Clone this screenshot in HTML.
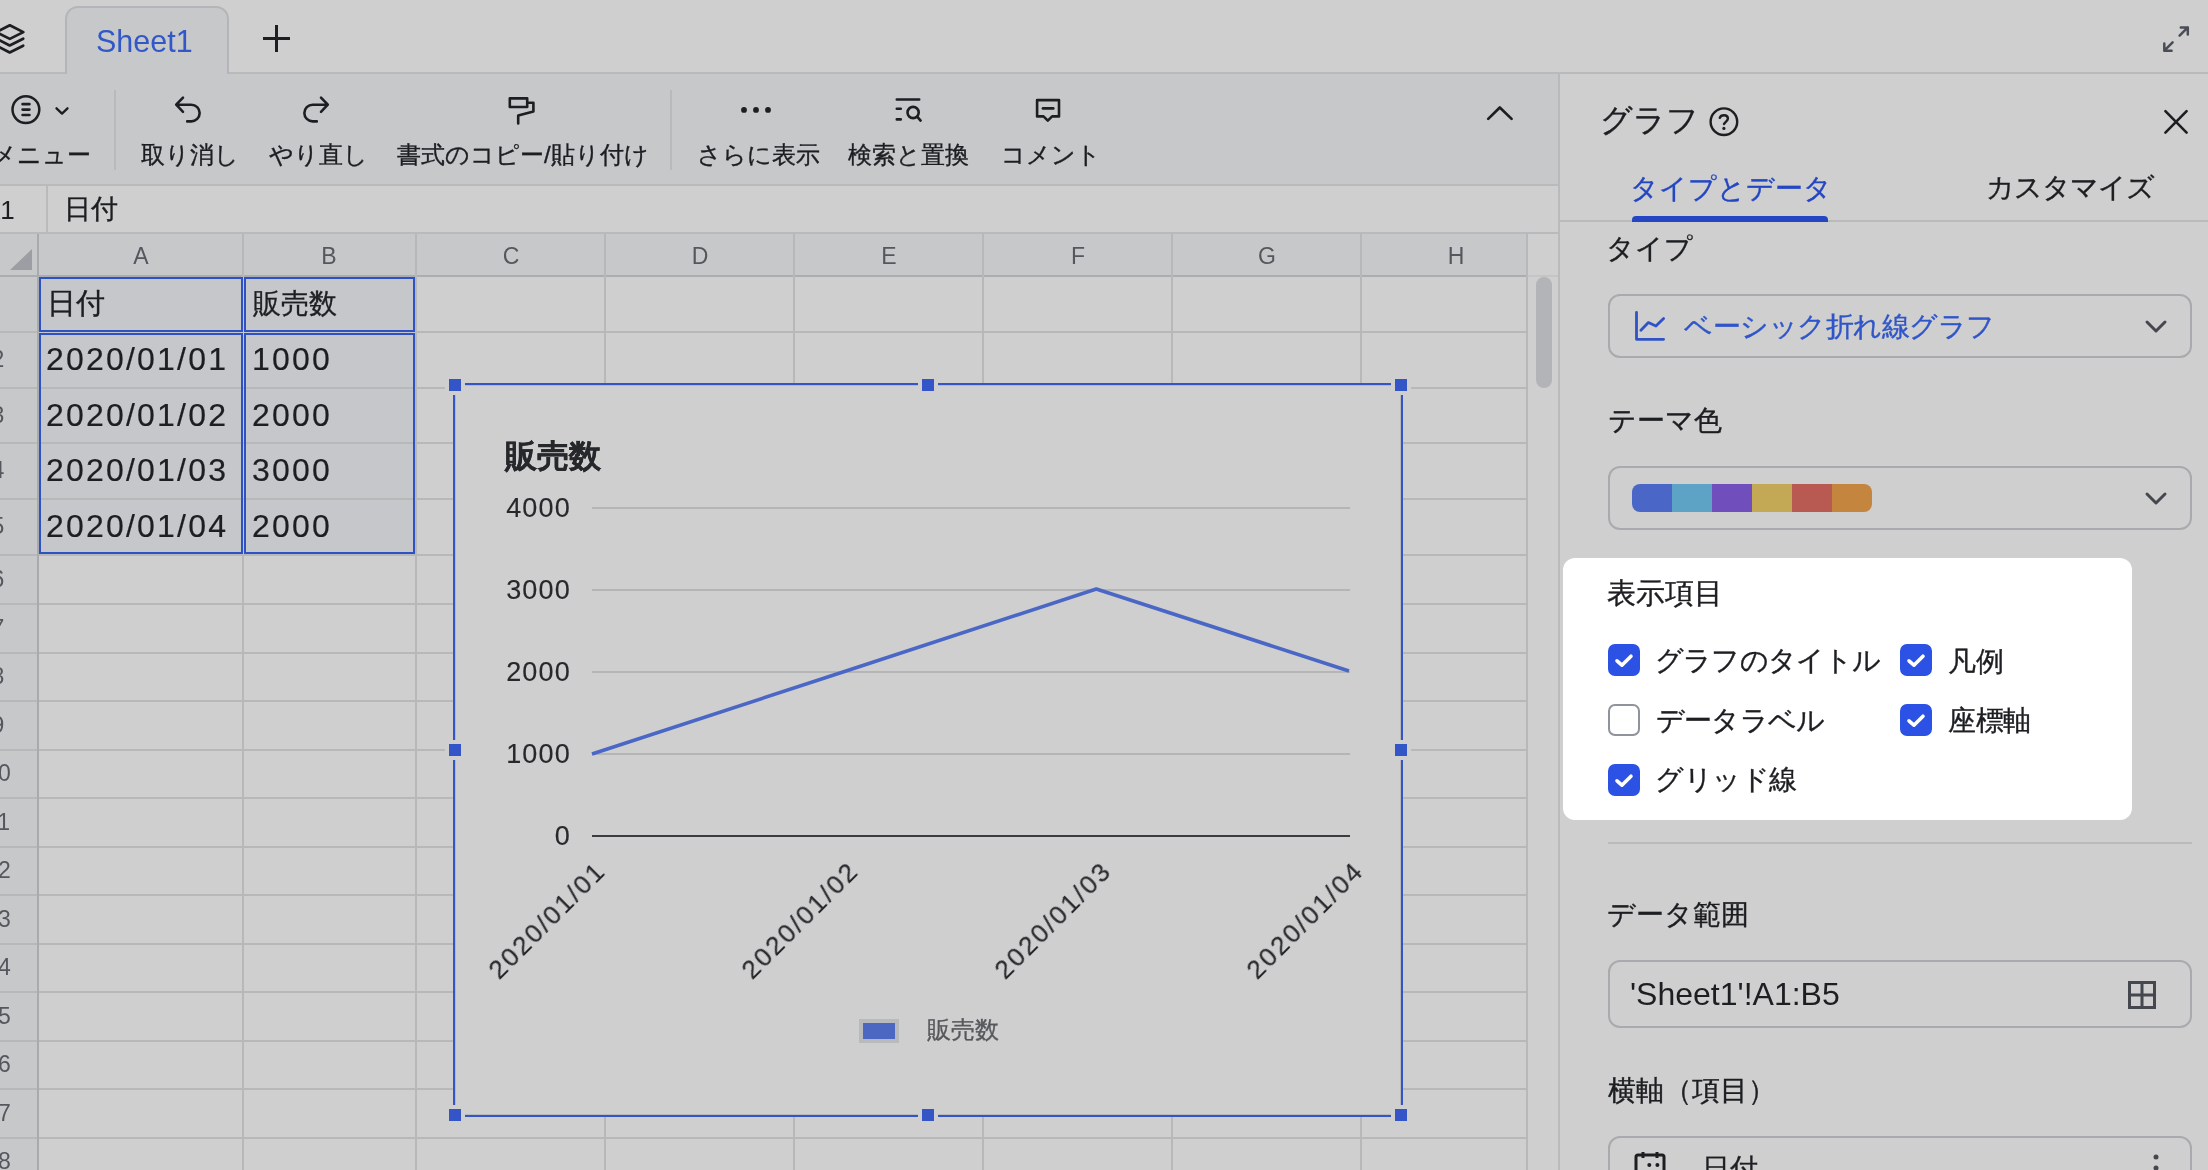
<!DOCTYPE html>
<html><head><meta charset="utf-8">
<style>
html,body{margin:0;padding:0}
body{width:2208px;height:1170px;overflow:hidden;position:relative;background:#cfcfcf;font-family:"Liberation Sans",sans-serif;color:#1c1e22}
.t{-webkit-text-stroke:0.35px currentColor}
.a{position:absolute}
.t{position:absolute;white-space:nowrap;line-height:1;will-change:transform}
.hl{position:absolute;height:2px;background:#bcbcbe}
.vl{position:absolute;width:2px;background:#bcbcbe}
svg{position:absolute;overflow:visible}
.tb{font-size:24px}
.tc{font-size:27px}
.cn{font-size:32px;letter-spacing:2.2px;-webkit-text-stroke:0.2px currentColor}
.cy{font-size:27px;letter-spacing:1.2px;-webkit-text-stroke:0.15px currentColor;color:#26282c}
.cx{font-size:26.3px;letter-spacing:2.1px;-webkit-text-stroke:0.15px currentColor;color:#26282c;white-space:nowrap}
</style></head><body>

<!-- ===== top tab bar ===== -->
<svg style="left:0;top:0" width="40" height="70" viewBox="0 0 40 70"><g fill="none" stroke="#1c1e22" stroke-width="2.7" stroke-linejoin="round" stroke-linecap="round">
<path d="M-3.7 32.1 L9.8 25.3 L23.3 32.1 L9.8 38.9 Z"/><path d="M-3.7 38.7 L9.7 45.5 L23.2 38.7"/><path d="M-3.7 45.7 L9.7 52.5 L23.2 45.7"/></g></svg>
<div class="a" style="left:65px;top:6px;width:164px;height:68px;background:#c7c8ca;border:2px solid #b4b5b8;border-bottom:none;border-radius:13px 13px 0 0;box-sizing:border-box"></div>
<div class="a" style="left:0;top:72px;width:65px;height:2px;background:#b9babc"></div>
<div class="a" style="left:229px;top:72px;width:1979px;height:2px;background:#b9babc"></div>
<div class="t" style="left:96px;top:26px;font-size:30.5px;color:#3258c8;-webkit-text-stroke:0">Sheet1</div>
<div class="a" style="left:263px;top:37px;width:27px;height:3px;background:#1c1e22"></div>
<div class="a" style="left:275px;top:25px;width:3px;height:27px;background:#1c1e22"></div>
<svg style="left:2140px;top:0" width="68" height="70" viewBox="2140 0 68 70"><path d="M2180.8 27.4 H2187.8 V34.5 M2187.8 27.4 L2179.6 35.6 M2164.3 43.4 V50.7 H2171.6 M2164.3 50.7 L2172.6 42.4" fill="none" stroke="#4a4d55" stroke-width="2.5" stroke-linecap="round" stroke-linejoin="round"/></svg>

<!-- ===== toolbar ===== -->
<div class="a" style="left:0;top:74px;width:1558px;height:111px;background:#c7c8ca"></div>
<div class="a" style="left:0;top:184px;width:1558px;height:2px;background:#b9babc"></div>
<div class="a" style="left:114px;top:90px;width:2px;height:80px;background:#b9babc"></div>
<div class="a" style="left:670px;top:90px;width:2px;height:80px;background:#b9babc"></div>

<svg style="left:0;top:0" width="2208" height="200" viewBox="0 0 2208 200">
<g fill="none" stroke="#1c1e22" stroke-linecap="round" stroke-linejoin="round">
<circle cx="25.9" cy="109.6" r="13.4" stroke-width="2.5"/>
<path d="M22.6 104.2 H29.4 M22.6 109.6 H29.4 M22.6 115 H29.4" stroke-width="2.7"/>
<path d="M56.5 108.3 L62 113.6 L67.5 108.3" stroke-width="2.3"/>
<path d="M183 97.6 L176.2 104.7 L183 111.8 M176.8 104.7 H191.3 A8.35 8.35 0 0 1 191.3 121.4 H187.2" stroke-width="2.6"/>
<path d="M321 97.6 L327.8 104.7 L321 111.8 M327.2 104.7 H312.7 A8.35 8.35 0 0 0 312.7 121.4 H316.8" stroke-width="2.6"/>
<path d="M509.8 98.4 H527.2 V107 H509.8 Z" stroke-width="2.6"/>
<path d="M527.6 102.8 H533.4 V111.6 L518.2 115.6 V123.4" stroke-width="2.6"/>
<path d="M896.8 99.5 H919.2 M896.8 108.7 H900.8 M896.8 119.4 H900.8" stroke-width="2.6"/>
<circle cx="913.1" cy="112.5" r="5.6" stroke-width="2.6"/>
<path d="M917.4 116.8 L920.6 120.6" stroke-width="2.6"/>
<path d="M1037.1 100.1 H1059 V116.4 H1052.1 L1047.8 120.6 L1043.5 116.4 H1037.1 Z" stroke-width="2.6"/>
<path d="M1042.9 108.4 H1053.3" stroke-width="2.6"/>
<path d="M1488.2 118.9 L1499.8 107.5 L1511.6 118.9" stroke-width="2.7"/>
</g>
<g fill="#1c1e22"><circle cx="744" cy="109.9" r="2.9"/><circle cx="756" cy="109.9" r="2.9"/><circle cx="768" cy="109.9" r="2.9"/></g>
</svg>
<div class="t tb" style="left:-8px;top:142.5px">メニュー</div>
<div class="t tb" style="left:141px;top:142.5px">取り消し</div>
<div class="t tb" style="left:269px;top:142.5px">やり直し</div>
<div class="t tb" style="left:397px;top:142.5px">書式のコピー/貼り付け</div>
<div class="t tb" style="left:697px;top:142.5px">さらに表示</div>
<div class="t tb" style="left:848px;top:142.5px">検索と置換</div>
<div class="t tb" style="left:1001px;top:142.5px">コメント</div>

<!-- ===== formula bar ===== -->
<div class="a" style="left:46px;top:186px;width:2px;height:47px;background:#b9babc"></div>
<div class="t" style="left:-17px;top:196.5px;font-size:26px;-webkit-text-stroke:0">A1</div>
<div class="t tc" style="left:63.5px;top:196px">日付</div>
<div class="a" style="left:0;top:232px;width:1558px;height:2px;background:#b9babc"></div>


<div class="a" style="left:0;top:234px;width:1527px;height:42px;background:#c7c8ca"></div>
<div class="a" style="left:1527px;top:234px;width:31px;height:936px;background:#cfcfcf"></div>
<div class="a" style="left:0;top:276px;width:37px;height:894px;background:#c7c8ca"></div>
<div class="a" style="left:0;top:330.8px;width:1527px;height:2px;background:#b7b8b8"></div>
<div class="a" style="left:0;top:386.8px;width:1527px;height:2px;background:#b7b8b8"></div>
<div class="a" style="left:0;top:442.4px;width:1527px;height:2px;background:#b7b8b8"></div>
<div class="a" style="left:0;top:498.1px;width:1527px;height:2px;background:#b7b8b8"></div>
<div class="a" style="left:0;top:553.6px;width:1527px;height:2px;background:#b7b8b8"></div>
<div class="a" style="left:0;top:603.3px;width:1527px;height:2px;background:#b7b8b8"></div>
<div class="a" style="left:0;top:651.8px;width:1527px;height:2px;background:#b7b8b8"></div>
<div class="a" style="left:0;top:700.3px;width:1527px;height:2px;background:#b7b8b8"></div>
<div class="a" style="left:0;top:748.8px;width:1527px;height:2px;background:#b7b8b8"></div>
<div class="a" style="left:0;top:797.3px;width:1527px;height:2px;background:#b7b8b8"></div>
<div class="a" style="left:0;top:845.8px;width:1527px;height:2px;background:#b7b8b8"></div>
<div class="a" style="left:0;top:894.3px;width:1527px;height:2px;background:#b7b8b8"></div>
<div class="a" style="left:0;top:942.8px;width:1527px;height:2px;background:#b7b8b8"></div>
<div class="a" style="left:0;top:991.3px;width:1527px;height:2px;background:#b7b8b8"></div>
<div class="a" style="left:0;top:1039.8px;width:1527px;height:2px;background:#b7b8b8"></div>
<div class="a" style="left:0;top:1088.3px;width:1527px;height:2px;background:#b7b8b8"></div>
<div class="a" style="left:0;top:1136.8px;width:1527px;height:2px;background:#b7b8b8"></div>
<div class="a" style="left:0;top:1185.3px;width:1527px;height:2px;background:#b7b8b8"></div>
<div class="a" style="left:0;top:275px;width:1527px;height:2px;background:#acadb0"></div>
<div class="a" style="left:1527px;top:275px;width:31px;height:1.5px;background:#c4c5c6"></div>
<div class="a" style="left:241.7px;top:234px;width:2px;height:936px;background:#b7b8b8"></div>
<div class="a" style="left:414.9px;top:234px;width:2px;height:936px;background:#b7b8b8"></div>
<div class="a" style="left:604.2px;top:234px;width:2px;height:936px;background:#b7b8b8"></div>
<div class="a" style="left:793.0px;top:234px;width:2px;height:936px;background:#b7b8b8"></div>
<div class="a" style="left:982.0px;top:234px;width:2px;height:936px;background:#b7b8b8"></div>
<div class="a" style="left:1171.0px;top:234px;width:2px;height:936px;background:#b7b8b8"></div>
<div class="a" style="left:1360.0px;top:234px;width:2px;height:936px;background:#b7b8b8"></div>
<div class="a" style="left:1526.0px;top:234px;width:2px;height:936px;background:#b7b8b8"></div>
<div class="a" style="left:37px;top:234px;width:2px;height:936px;background:#a9aaad"></div>
<div class="a" style="left:1558px;top:74px;width:2px;height:1096px;background:#b9babc"></div>
<svg style="left:10px;top:249px" width="22" height="22" viewBox="0 0 22 22"><path d="M22 0 V21 H0 Z" fill="#9b9ea3"/></svg>
<div class="t" style="left:90.8px;width:100px;text-align:center;top:245px;font-size:23px;color:#54575d;-webkit-text-stroke:0">A</div>
<div class="t" style="left:279.3px;width:100px;text-align:center;top:245px;font-size:23px;color:#54575d;-webkit-text-stroke:0">B</div>
<div class="t" style="left:460.6px;width:100px;text-align:center;top:245px;font-size:23px;color:#54575d;-webkit-text-stroke:0">C</div>
<div class="t" style="left:649.6px;width:100px;text-align:center;top:245px;font-size:23px;color:#54575d;-webkit-text-stroke:0">D</div>
<div class="t" style="left:838.5px;width:100px;text-align:center;top:245px;font-size:23px;color:#54575d;-webkit-text-stroke:0">E</div>
<div class="t" style="left:1027.5px;width:100px;text-align:center;top:245px;font-size:23px;color:#54575d;-webkit-text-stroke:0">F</div>
<div class="t" style="left:1216.5px;width:100px;text-align:center;top:245px;font-size:23px;color:#54575d;-webkit-text-stroke:0">G</div>
<div class="t" style="left:1405.5px;width:100px;text-align:center;top:245px;font-size:23px;color:#54575d;-webkit-text-stroke:0">H</div>
<div class="t" style="left:-52.5px;width:100px;text-align:center;top:347.8px;font-size:23px;color:#54575d;-webkit-text-stroke:0">2</div>
<div class="t" style="left:-52.5px;width:100px;text-align:center;top:403.6px;font-size:23px;color:#54575d;-webkit-text-stroke:0">3</div>
<div class="t" style="left:-52.5px;width:100px;text-align:center;top:459.2px;font-size:23px;color:#54575d;-webkit-text-stroke:0">4</div>
<div class="t" style="left:-52.5px;width:100px;text-align:center;top:514.9px;font-size:23px;color:#54575d;-webkit-text-stroke:0">5</div>
<div class="t" style="left:-52.5px;width:100px;text-align:center;top:567.5px;font-size:23px;color:#54575d;-webkit-text-stroke:0">6</div>
<div class="t" style="left:-52.5px;width:100px;text-align:center;top:616.5px;font-size:23px;color:#54575d;-webkit-text-stroke:0">7</div>
<div class="t" style="left:-52.5px;width:100px;text-align:center;top:665.0px;font-size:23px;color:#54575d;-webkit-text-stroke:0">8</div>
<div class="t" style="left:-52.5px;width:100px;text-align:center;top:713.5px;font-size:23px;color:#54575d;-webkit-text-stroke:0">9</div>
<div class="t" style="left:-52.5px;width:100px;text-align:center;top:762.0px;font-size:23px;color:#54575d;-webkit-text-stroke:0">10</div>
<div class="t" style="left:-52.5px;width:100px;text-align:center;top:810.5px;font-size:23px;color:#54575d;-webkit-text-stroke:0">11</div>
<div class="t" style="left:-52.5px;width:100px;text-align:center;top:859.0px;font-size:23px;color:#54575d;-webkit-text-stroke:0">12</div>
<div class="t" style="left:-52.5px;width:100px;text-align:center;top:907.5px;font-size:23px;color:#54575d;-webkit-text-stroke:0">13</div>
<div class="t" style="left:-52.5px;width:100px;text-align:center;top:956.0px;font-size:23px;color:#54575d;-webkit-text-stroke:0">14</div>
<div class="t" style="left:-52.5px;width:100px;text-align:center;top:1004.5px;font-size:23px;color:#54575d;-webkit-text-stroke:0">15</div>
<div class="t" style="left:-52.5px;width:100px;text-align:center;top:1053.0px;font-size:23px;color:#54575d;-webkit-text-stroke:0">16</div>
<div class="t" style="left:-52.5px;width:100px;text-align:center;top:1101.5px;font-size:23px;color:#54575d;-webkit-text-stroke:0">17</div>
<div class="t" style="left:-52.5px;width:100px;text-align:center;top:1150.0px;font-size:23px;color:#54575d;-webkit-text-stroke:0">18</div>
<div class="a" style="left:39px;top:277px;width:376px;height:277px;background:#c6c7cb"></div>
<div class="a" style="left:41px;top:386.8px;width:372px;height:2px;background:#b7b8b8"></div>
<div class="a" style="left:41px;top:442.4px;width:372px;height:2px;background:#b7b8b8"></div>
<div class="a" style="left:41px;top:498.1px;width:372px;height:2px;background:#b7b8b8"></div>
<div class="a" style="left:39px;top:277px;width:204px;height:55px;border:2px solid #2f51c6;box-sizing:border-box"></div>
<div class="a" style="left:244px;top:277px;width:171px;height:55px;border:2px solid #2f51c6;box-sizing:border-box"></div>
<div class="a" style="left:39px;top:333px;width:204px;height:221px;border:2px solid #2f51c6;box-sizing:border-box"></div>
<div class="a" style="left:244px;top:333px;width:171px;height:221px;border:2px solid #2f51c6;box-sizing:border-box"></div>
<div class="t tc" style="left:47px;top:289px;font-size:29px">日付</div>
<div class="t tc" style="left:253px;top:290px;font-size:28px">販売数</div>
<div class="t cn" style="left:46px;top:342.8px">2020/01/01</div>
<div class="t cn" style="left:252px;top:342.8px">1000</div>
<div class="t cn" style="left:46px;top:398.6px">2020/01/02</div>
<div class="t cn" style="left:252px;top:398.6px">2000</div>
<div class="t cn" style="left:46px;top:454.2px">2020/01/03</div>
<div class="t cn" style="left:252px;top:454.2px">3000</div>
<div class="t cn" style="left:46px;top:509.9px">2020/01/04</div>
<div class="t cn" style="left:252px;top:509.9px">2000</div>
<div class="a" style="left:1536px;top:277px;width:16px;height:111px;border-radius:8px;background:#b3b4b7"></div>
<div class="a" style="left:455px;top:385px;width:946px;height:730px;background:#cfcfcf;border:1.5px solid #b9b9ba;box-sizing:border-box"></div>
<div class="a" style="left:453px;top:383px;width:950px;height:734px;border:2px solid #3355c8;box-sizing:border-box"></div>
<div class="a" style="left:445.0px;top:375.0px;width:12px;height:12px;border:4px solid #cfcfcf;background:#3355c8"></div>
<div class="a" style="left:445.0px;top:740.0px;width:12px;height:12px;border:4px solid #cfcfcf;background:#3355c8"></div>
<div class="a" style="left:445.0px;top:1105.0px;width:12px;height:12px;border:4px solid #cfcfcf;background:#3355c8"></div>
<div class="a" style="left:918.0px;top:375.0px;width:12px;height:12px;border:4px solid #cfcfcf;background:#3355c8"></div>
<div class="a" style="left:918.0px;top:1105.0px;width:12px;height:12px;border:4px solid #cfcfcf;background:#3355c8"></div>
<div class="a" style="left:1391.0px;top:375.0px;width:12px;height:12px;border:4px solid #cfcfcf;background:#3355c8"></div>
<div class="a" style="left:1391.0px;top:740.0px;width:12px;height:12px;border:4px solid #cfcfcf;background:#3355c8"></div>
<div class="a" style="left:1391.0px;top:1105.0px;width:12px;height:12px;border:4px solid #cfcfcf;background:#3355c8"></div>
<div class="t" style="left:505px;top:440px;font-size:32px;font-weight:bold;color:#26282c">販売数</div>
<div class="t cy" style="left:470px;width:101px;text-align:right;top:495px">4000</div>
<div class="a" style="left:592px;top:507px;width:758px;height:2px;background:#b4b5b7"></div>
<div class="t cy" style="left:470px;width:101px;text-align:right;top:577px">3000</div>
<div class="a" style="left:592px;top:589px;width:758px;height:2px;background:#b4b5b7"></div>
<div class="t cy" style="left:470px;width:101px;text-align:right;top:659px">2000</div>
<div class="a" style="left:592px;top:671px;width:758px;height:2px;background:#b4b5b7"></div>
<div class="t cy" style="left:470px;width:101px;text-align:right;top:741px">1000</div>
<div class="a" style="left:592px;top:753px;width:758px;height:2px;background:#b4b5b7"></div>
<div class="t cy" style="left:470px;width:101px;text-align:right;top:823px">0</div>
<div class="a" style="left:592px;top:834.5px;width:758px;height:2.5px;background:#3a3c40"></div>
<svg style="left:0;top:0" width="2208" height="1170"><polyline points="592,754 844.5,671.5 1096.3,589 1349,671" fill="none" stroke="#4a67c6" stroke-width="3.6" stroke-linejoin="round"/></svg>
<div class="t cx" style="right:1616px;top:857px;transform-origin:100% 0;transform:rotate(-45deg)">2020/01/01</div>
<div class="t cx" style="right:1363.5px;top:857px;transform-origin:100% 0;transform:rotate(-45deg)">2020/01/02</div>
<div class="t cx" style="right:1110.7px;top:857px;transform-origin:100% 0;transform:rotate(-45deg)">2020/01/03</div>
<div class="t cx" style="right:858px;top:857px;transform-origin:100% 0;transform:rotate(-45deg)">2020/01/04</div>
<div class="a" style="left:859px;top:1019px;width:40px;height:24px;background:#b9babd"></div>
<div class="a" style="left:863px;top:1023px;width:32px;height:16px;background:#4b67c2"></div>
<div class="t" style="left:927px;top:1018px;font-size:24px;color:#55575b">販売数</div>
<div class="t" style="left:1600px;top:104px;font-size:32px">グラフ</div>
<svg style="left:1700px;top:95px" width="50" height="50" viewBox="1700 95 50 50"><g fill="none" stroke="#1c1e22" stroke-width="2.4" stroke-linecap="round"><circle cx="1723.9" cy="121.7" r="13.3"/><path d="M1719.8 117.8 C1720.4 115.9 1722 115.3 1724 115.3 C1726.5 115.3 1727.9 116.8 1727.9 118.6 C1727.9 120.9 1725.2 121.6 1724 124"/></g><circle cx="1723.9" cy="128.4" r="1.6" fill="#1c1e22"/></svg>
<svg style="left:2150px;top:95px" width="50" height="50" viewBox="2150 95 50 50"><path d="M2165.4 111.2 L2186.6 132.6 M2186.6 111.2 L2165.4 132.6" stroke="#1c1e22" stroke-width="2.6" stroke-linecap="round"/></svg>
<div class="t" style="left:1630px;top:175px;font-size:27.5px;color:#2446c2">タイプとデータ</div>
<div class="t" style="left:1986px;top:174px;font-size:27.5px;letter-spacing:-1px">カスタマイズ</div>
<div class="a" style="left:1560px;top:220px;width:648px;height:2px;background:#b9babc"></div>
<div class="a" style="left:1631.5px;top:215.5px;width:196.5px;height:6px;border-radius:4px 4px 0 0;background:#2446c2"></div>
<div class="t" style="left:1606px;top:235px;font-size:28px">タイプ</div>
<div class="a" style="left:1608px;top:294px;width:584px;height:64px;border:2px solid #a9aaad;border-radius:12px;box-sizing:border-box"></div>
<svg style="left:1620px;top:300px" width="60" height="50" viewBox="1620 300 60 50"><g fill="none" stroke="#2f53c6" stroke-width="2.8" stroke-linecap="round" stroke-linejoin="round"><path d="M1636.5 312.4 V339.3 H1663.6"/><path d="M1640.9 330.3 L1648.4 322.6 L1655.9 326.1 L1663.6 318.4"/></g></svg>
<div class="t" style="left:1684px;top:313px;font-size:28px;letter-spacing:-0.5px;color:#2f55c9">ベーシック折れ線グラフ</div>
<svg style="left:2145px;top:320px" width="22" height="14" viewBox="0 0 22 14"><path d="M2 2 L11 11 L20 2" fill="none" stroke="#44474e" stroke-width="3" stroke-linecap="round" stroke-linejoin="round"/></svg>
<div class="t" style="left:1608px;top:407px;font-size:28px">テーマ色</div>
<div class="a" style="left:1608px;top:466px;width:584px;height:64px;border:2px solid #a9aaad;border-radius:12px;box-sizing:border-box"></div>
<div class="a" style="left:1632px;top:484px;width:240px;height:28px;border-radius:8px;overflow:hidden;display:flex"><div style="width:40px;height:28px;background:#4a67c7"></div><div style="width:40px;height:28px;background:#5da3c6"></div><div style="width:40px;height:28px;background:#704fbd"></div><div style="width:40px;height:28px;background:#c3a956"></div><div style="width:40px;height:28px;background:#b85a51"></div><div style="width:40px;height:28px;background:#c4853f"></div></div>
<svg style="left:2145px;top:492px" width="22" height="14" viewBox="0 0 22 14"><path d="M2 2 L11 11 L20 2" fill="none" stroke="#44474e" stroke-width="3" stroke-linecap="round" stroke-linejoin="round"/></svg>
<div class="a" style="left:1563px;top:558px;width:569px;height:262px;border-radius:12px;background:#ffffff"></div>
<div class="t" style="left:1607px;top:579px;font-size:29px">表示項目</div>
<div class="a" style="left:1608px;top:644px;width:32px;height:32px;border-radius:7px;background:#2b52e4"></div>
<svg style="left:1608px;top:644px" width="32" height="32" viewBox="0 0 32 32"><path d="M9 16.8 L13.9 21.2 L23 12.2" fill="none" stroke="#fff" stroke-width="3.6" stroke-linecap="round" stroke-linejoin="round"/></svg>
<div class="a" style="left:1900px;top:644px;width:32px;height:32px;border-radius:7px;background:#2b52e4"></div>
<svg style="left:1900px;top:644px" width="32" height="32" viewBox="0 0 32 32"><path d="M9 16.8 L13.9 21.2 L23 12.2" fill="none" stroke="#fff" stroke-width="3.6" stroke-linecap="round" stroke-linejoin="round"/></svg>
<div class="a" style="left:1608px;top:704px;width:32px;height:32px;border-radius:7px;border:2px solid #8f949c;box-sizing:border-box;background:#fff"></div>
<div class="a" style="left:1900px;top:704px;width:32px;height:32px;border-radius:7px;background:#2b52e4"></div>
<svg style="left:1900px;top:704px" width="32" height="32" viewBox="0 0 32 32"><path d="M9 16.8 L13.9 21.2 L23 12.2" fill="none" stroke="#fff" stroke-width="3.6" stroke-linecap="round" stroke-linejoin="round"/></svg>
<div class="a" style="left:1608px;top:764px;width:32px;height:32px;border-radius:7px;background:#2b52e4"></div>
<svg style="left:1608px;top:764px" width="32" height="32" viewBox="0 0 32 32"><path d="M9 16.8 L13.9 21.2 L23 12.2" fill="none" stroke="#fff" stroke-width="3.6" stroke-linecap="round" stroke-linejoin="round"/></svg>
<div class="t" style="left:1655px;top:647px;font-size:28px;letter-spacing:-0.8px">グラフのタイトル</div>
<div class="t" style="left:1948px;top:647.5px;font-size:28px;letter-spacing:0px">凡例</div>
<div class="t" style="left:1656px;top:707px;font-size:28px;letter-spacing:-0.8px">データラベル</div>
<div class="t" style="left:1948px;top:707px;font-size:28px;letter-spacing:-0.4px">座標軸</div>
<div class="t" style="left:1655px;top:766px;font-size:28px;letter-spacing:-0.4px">グリッド線</div>
<div class="a" style="left:1608px;top:841.5px;width:584px;height:2px;background:#b9babc"></div>
<div class="t" style="left:1607px;top:901px;font-size:28px">データ範囲</div>
<div class="a" style="left:1608px;top:960px;width:584px;height:68px;border:2px solid #a9aaad;border-radius:12px;box-sizing:border-box"></div>
<div class="t" style="left:1630px;top:978px;font-size:32px;-webkit-text-stroke:0">'Sheet1'!A1:B5</div>
<svg style="left:2127px;top:980px" width="30" height="30" viewBox="0 0 30 30"><rect x="2.5" y="2.5" width="25" height="25" fill="none" stroke="#44474e" stroke-width="3"/><path d="M15 2.5 V27.5 M2.5 15 H27.5" stroke="#44474e" stroke-width="3"/></svg>
<div class="t" style="left:1608px;top:1077px;font-size:28px">横軸（項目）</div>
<div class="a" style="left:1608px;top:1136px;width:584px;height:68px;border:2px solid #a9aaad;border-radius:12px;box-sizing:border-box"></div>
<svg style="left:1633px;top:1150px" width="34" height="34" viewBox="0 0 34 34"><rect x="3" y="5" width="28" height="26" rx="2" fill="none" stroke="#1c1e22" stroke-width="3"/><path d="M10 2 V8 M24 2 V8" stroke="#1c1e22" stroke-width="3"/><circle cx="16.3" cy="15" r="2" fill="#1c1e22"/><circle cx="24.4" cy="15" r="2" fill="#1c1e22"/></svg>
<div class="t" style="left:1702px;top:1155px;font-size:28px">日付</div>
<svg style="left:2150px;top:1150px" width="12" height="30" viewBox="0 0 12 30"><circle cx="6" cy="7" r="2.5" fill="#44474e"/><circle cx="6" cy="18" r="2.5" fill="#44474e"/><circle cx="6" cy="29" r="2.5" fill="#44474e"/></svg>

</body></html>
